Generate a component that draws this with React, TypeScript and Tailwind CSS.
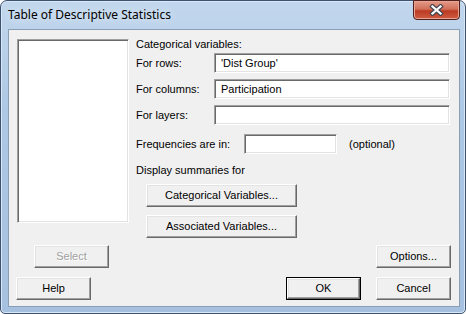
const sunken =
  "border border-t-[#a0a0a0] border-l-[#a0a0a0] border-r-white border-b-white bg-white shadow-[inset_1px_1px_0_#696969,inset_-1px_-1px_0_#e3e3e3]";
const raised =
  "flex items-center justify-center bg-[#f0f0f0] border border-t-white border-l-white border-r-[#696969] border-b-[#696969] shadow-[inset_-1px_-1px_0_#a0a0a0,inset_1px_1px_0_#e3e3e3]";

type ButtonProps = {
  label: string;
  width?: string;
  disabled?: boolean;
  isDefault?: boolean;
};

const Button = ({ label, width = "w-[75px]", disabled, isDefault }: ButtonProps) => {
  if (isDefault) {
    return (
      <div className={`${width} flex h-[23px] border border-black`}>
        <div className={`${raised} flex-1`}>{label}</div>
      </div>
    );
  }
  return (
    <div
      className={`${raised} ${width} h-[23px] ${disabled ? "text-[#a0a0a0] [text-shadow:1px_1px_0_#fff]" : ""}`}
    >
      {label}
    </div>
  );
};

const Field = ({ value, width = "flex-1" }: { value?: string; width?: string }) => (
  <div className={`${sunken} ${width} flex h-[20px] items-center pl-[6px]`}>{value}</div>
);

const CloseIcon = () => (
  <svg width="15" height="12" viewBox="0 0 15 12">
    <path d="M3.5 2.5 L11.5 9.5 M11.5 2.5 L3.5 9.5" stroke="#434652" strokeWidth="4.5" strokeLinecap="square" />
    <path d="M3.5 2.5 L11.5 9.5 M11.5 2.5 L3.5 9.5" stroke="#fff" strokeWidth="2.3" strokeLinecap="square" />
  </svg>
);

export default function App() {
  return (
    <div className="h-[314px] w-[466px] font-['Liberation_Sans',Arial,sans-serif] text-[11px] leading-[13px] text-black">
      <div className="flex h-full flex-col rounded-t-[7px] rounded-b-[5px] border border-[#3d5170] bg-[linear-gradient(180deg,#c2d7ed_0%,#adc8e5_35%,#a6c1df_100%)] shadow-[inset_0_0_0_1px_#dae7f5]">
        {/* title bar */}
        <div className="flex h-[28px] items-start justify-between">
          <div className="self-center pl-[7px] font-['Noto_Sans',sans-serif] text-[12px] leading-[16px] text-black [text-shadow:0_0_8px_#eef5fc]">
            Table of Descriptive Statistics
          </div>
          <div className="mr-[5px] mt-[-1px] flex h-[20px] w-[47px] items-center justify-center rounded-b-[4px] border border-[#50201c] bg-[linear-gradient(180deg,#e29a88_0%,#d2705a_45%,#bb3a22_55%,#cf5e42_100%)] shadow-[inset_0_0_0_1px_#eaa493]">
            <CloseIcon />
          </div>
        </div>

        {/* client area */}
        <div className="mb-[6px] ml-[7px] mr-[5px] flex flex-1 flex-col border border-[#8a9eb6] bg-[#f0f0f0]">
          <div className="mt-[8px] flex pl-[8px]">
            <div className={`${sunken} mt-[1px] h-[184px] w-[112px]`} />

            <div className="ml-[7px] flex w-[314px] flex-col">
              <div className="h-[13px]">Categorical variables:</div>
              <div className="mt-[2px] flex h-[20px] items-center">
                <div className="w-[78px]">For rows:</div>
                <Field value="'Dist Group'" />
              </div>
              <div className="mt-[6px] flex h-[20px] items-center">
                <div className="w-[78px]">For columns:</div>
                <Field value="Participation" />
              </div>
              <div className="mt-[6px] flex h-[20px] items-center">
                <div className="w-[78px]">For layers:</div>
                <Field />
              </div>
              <div className="mt-[9px] flex h-[20px] items-center">
                <div className="w-[108px]">Frequencies are in:</div>
                <Field width="w-[93px]" />
                <div className="ml-[12px]">(optional)</div>
              </div>
              <div className="mt-[10px] h-[13px]">Display summaries for</div>
              <div className="ml-[10px] mt-[7px]">
                <Button label="Categorical Variables..." width="w-[151px]" />
              </div>
              <div className="ml-[10px] mt-[8px]">
                <Button label="Associated Variables..." width="w-[151px]" />
              </div>
            </div>
          </div>

          <div className="mt-[7px] flex justify-between pl-[25px] pr-[8px]">
            <Button label="Select" disabled />
            <Button label="Options..." />
          </div>
          <div className="mt-[9px] flex pl-[7px] pr-[8px]">
            <Button label="Help" />
            <div className="ml-auto flex gap-[15px]">
              <Button label="OK" isDefault />
              <Button label="Cancel" />
            </div>
          </div>
        </div>
      </div>
    </div>
  );
}
